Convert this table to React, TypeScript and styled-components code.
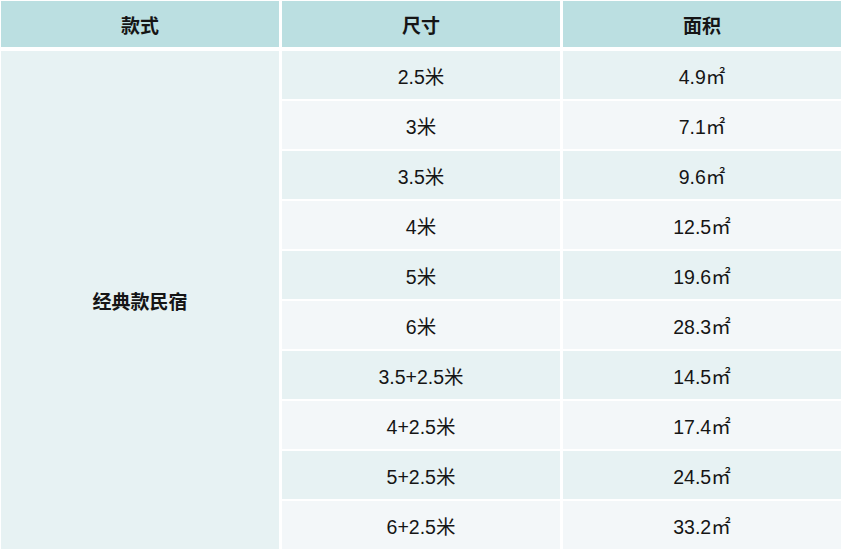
import * as React from 'react';
import styled, { createGlobalStyle } from 'styled-components';

type SizeRow = {
  size: string;
  area: string;
};

const rows: SizeRow[] = [
  { size: '2.5米', area: '4.9㎡' },
  { size: '3米', area: '7.1㎡' },
  { size: '3.5米', area: '9.6㎡' },
  { size: '4米', area: '12.5㎡' },
  { size: '5米', area: '19.6㎡' },
  { size: '6米', area: '28.3㎡' },
  { size: '3.5+2.5米', area: '14.5㎡' },
  { size: '4+2.5米', area: '17.4㎡' },
  { size: '5+2.5米', area: '24.5㎡' },
  { size: '6+2.5米', area: '33.2㎡' },
];

const GlobalStyle = createGlobalStyle`
  html, body {
    margin: 0;
    padding: 0;
    background: #fff;
  }
`;

const Table = styled.div`
  display: grid;
  grid-template-columns: repeat(3, 1fr);
  grid-template-rows: 48px repeat(10, 48px);
  column-gap: 3px;
  row-gap: 2px;
  padding: 1px;
  width: 842px;
  box-sizing: border-box;
  font-family: 'Liberation Sans', 'Noto Sans CJK SC', sans-serif;
  color: #151515;
`;

const HeadCell = styled.div`
  display: flex;
  align-items: center;
  justify-content: center;
  background: #bbdfe1;
  margin-bottom: 2px;
  font-family: 'Noto Sans CJK SC', sans-serif;
  font-size: 19px;
  font-weight: 700;
`;

const StyleCell = styled.div<{ $span: number }>`
  grid-column: 1;
  grid-row: 2 / span ${(p) => p.$span};
  display: flex;
  align-items: center;
  justify-content: center;
  background: #e7f2f3;
  font-family: 'Noto Sans CJK SC', sans-serif;
  font-size: 19px;
  font-weight: 700;
`;

const Cell = styled.div<{ $odd: boolean; $col: number }>`
  grid-column: ${(p) => p.$col};
  display: flex;
  align-items: center;
  justify-content: center;
  background: ${(p) => (p.$odd ? '#e7f2f3' : '#f3f7f9')};
  font-size: 19.5px;
`;

export default function App() {
  return (
    <>
      <GlobalStyle />
      <Table>
        <HeadCell>款式</HeadCell>
        <HeadCell>尺寸</HeadCell>
        <HeadCell>面积</HeadCell>
        <StyleCell $span={rows.length}>经典款民宿</StyleCell>
        {rows.map((row, i) => (
          <React.Fragment key={row.size}>
            <Cell $odd={i % 2 === 0} $col={2}>
              {row.size}
            </Cell>
            <Cell $odd={i % 2 === 0} $col={3}>
              {row.area}
            </Cell>
          </React.Fragment>
        ))}
      </Table>
    </>
  );
}
